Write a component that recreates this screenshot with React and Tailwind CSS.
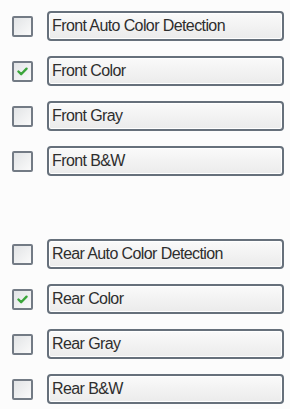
import React from "react";

const Check = ({ checked }) => (
  <div className="w-[21px] h-[21px] border-2 border-[#737b85] rounded-[2px] bg-gradient-to-br from-[#e2e4e6] to-[#fafafa] flex items-center justify-center shrink-0">
    {checked && (
      <svg width="11" height="9" viewBox="0 0 12 10">
        <path d="M1.5 5 L4.5 8 L10.5 1.8" stroke="#3aa53a" strokeWidth="2.6" fill="none" strokeLinecap="round" strokeLinejoin="round" />
      </svg>
    )}
  </div>
);

const Row = ({ label, checked }) => (
  <div className="flex items-center h-[30px]">
    <div className="w-[47px] flex justify-start pl-[12px] shrink-0">
      <Check checked={checked} />
    </div>
    <div className="w-[237px] h-[30px] rounded-[4px] border-2 border-[#66707b] bg-gradient-to-b from-[#fafafa] to-[#ebebeb] shadow-[inset_0_0_0_1px_#ffffff] flex items-center pl-[3px]">
      <span className="text-[16px] tracking-[-0.6px] text-[#2e2e2e] font-['Liberation_Sans',Arial,sans-serif] leading-none">{label}</span>
    </div>
  </div>
);

export default function App() {
  return (
    <div className="w-[290px] h-[409px] bg-[#fcfcfc] pt-[11px] flex flex-col gap-[15px]">
      <Row label="Front Auto Color Detection" />
      <Row label="Front Color" checked />
      <Row label="Front Gray" />
      <Row label="Front B&W" />
      <div className="h-[33px]" />
      <Row label="Rear Auto Color Detection" />
      <Row label="Rear Color" checked />
      <Row label="Rear Gray" />
      <Row label="Rear B&W" />
    </div>
  );
}
